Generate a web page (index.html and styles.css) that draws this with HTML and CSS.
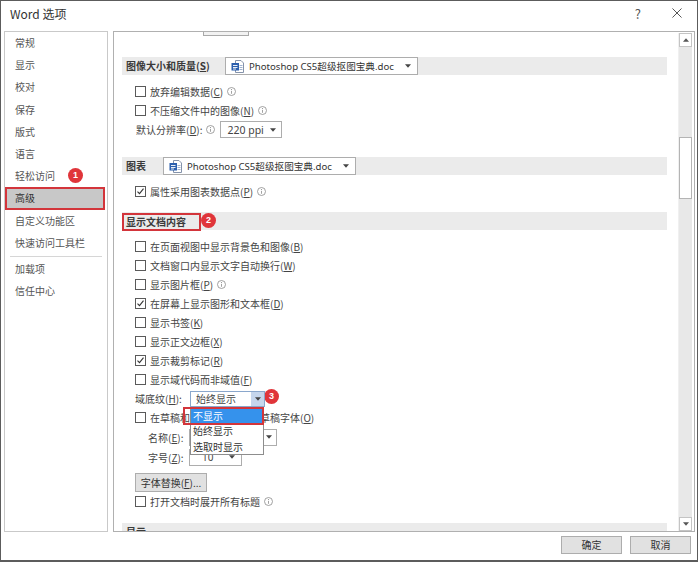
FILE: index.html
```html
<!DOCTYPE html>
<html lang="zh-CN">
 <head>
  <meta charset="utf-8">
  <title>Word 选项</title>
  <link rel="stylesheet" href="styles.css">
 </head>
 <body>

  <div class="dialog">

    <div class="titlebar">
      <span class="title">Word 选项</span>
      <span class="help">?</span>
      <svg class="close" viewBox="0 0 11 11"><path d="M0.5 0.5l10 10M10.5 0.5l-10 10" stroke="#444" stroke-width="1"/></svg>
    </div>

    <div class="main">

      <ul class="nav">
        <li>常规</li>
        <li>显示</li>
        <li>校对</li>
        <li>保存</li>
        <li>版式</li>
        <li>语言</li>
        <li>轻松访问<span class="badge b1">1</span></li>
        <li class="active">高级</li>
        <li>自定义功能区</li>
        <li>快速访问工具栏</li>
        <li class="sep"></li>
        <li>加载项</li>
        <li>信任中心</li>
      </ul>

      <div class="panel">
        <div class="content">

          <div class="stub"></div>

          <!-- image size and quality -->
          <div class="head first">
            <span class="hlabel wide">图像大小和质量(<u>S</u>)</span>
            <div class="combo doc">
              <svg class="docicon" viewBox="0 0 13 13">
                <path d="M4.5 0.5h5.5l2.5 2.5v9.5h-8z" fill="#fff" stroke="#8593ab"/>
                <path d="M8.5 5.5h3M8.5 7.5h3M8.5 9.5h3" stroke="#9fb3d1"/>
                <rect x="0.5" y="3" width="7.5" height="7.5" fill="#2b5fae"/>
                <path d="M2 5.5h4.5M2 7.5h4.5M2 9h3" stroke="#fff" stroke-width="0.9"/>
              </svg>
              <span>Photoshop CS5超级抠图宝典.doc</span>
              <svg class="arr" viewBox="0 0 7 4"><path d="M0 0h7L3.5 4z"/></svg>
            </div>
          </div>
          <div class="rows rows-a">
            <div class="row"><span class="cb"></span>放弃编辑数据(<u>C</u>)<svg class="info" viewBox="0 0 9 9"><circle cx="4.5" cy="4.5" r="4" fill="none" stroke="#8a8a8a" stroke-width="0.8"/><path d="M4.5 4v2.8" stroke="#8a8a8a" stroke-width="0.8"/><circle cx="4.5" cy="2.6" r="0.55" fill="#8a8a8a"/></svg></div>
            <div class="row"><span class="cb"></span>不压缩文件中的图像(<u>N</u>)<svg class="info" viewBox="0 0 9 9"><circle cx="4.5" cy="4.5" r="4" fill="none" stroke="#8a8a8a" stroke-width="0.8"/><path d="M4.5 4v2.8" stroke="#8a8a8a" stroke-width="0.8"/><circle cx="4.5" cy="2.6" r="0.55" fill="#8a8a8a"/></svg></div>
            <div class="row res">默认分辨率(<u>D</u>):<svg class="info" viewBox="0 0 9 9"><circle cx="4.5" cy="4.5" r="4" fill="none" stroke="#8a8a8a" stroke-width="0.8"/><path d="M4.5 4v2.8" stroke="#8a8a8a" stroke-width="0.8"/><circle cx="4.5" cy="2.6" r="0.55" fill="#8a8a8a"/></svg>
              <div class="combo ppi"><span>220 ppi</span><svg class="arr" viewBox="0 0 7 4"><path d="M0 0h7L3.5 4z"/></svg></div>
            </div>
          </div>

          <!-- chart -->
          <div class="head">
            <span class="hlabel narrow">图表</span>
            <div class="combo doc">
              <svg class="docicon" viewBox="0 0 13 13">
                <path d="M4.5 0.5h5.5l2.5 2.5v9.5h-8z" fill="#fff" stroke="#8593ab"/>
                <path d="M8.5 5.5h3M8.5 7.5h3M8.5 9.5h3" stroke="#9fb3d1"/>
                <rect x="0.5" y="3" width="7.5" height="7.5" fill="#2b5fae"/>
                <path d="M2 5.5h4.5M2 7.5h4.5M2 9h3" stroke="#fff" stroke-width="0.9"/>
              </svg>
              <span>Photoshop CS5超级抠图宝典.doc</span>
              <svg class="arr" viewBox="0 0 7 4"><path d="M0 0h7L3.5 4z"/></svg>
            </div>
          </div>
          <div class="rows rows-b">
            <div class="row"><span class="cb on"><svg viewBox="0 0 9 9"><path d="M1.5 4.6l2 2 4-5" fill="none" stroke="#333" stroke-width="1.1"/></svg></span>属性采用图表数据点(<u>P</u>)<svg class="info" viewBox="0 0 9 9"><circle cx="4.5" cy="4.5" r="4" fill="none" stroke="#8a8a8a" stroke-width="0.8"/><path d="M4.5 4v2.8" stroke="#8a8a8a" stroke-width="0.8"/><circle cx="4.5" cy="2.6" r="0.55" fill="#8a8a8a"/></svg></div>
          </div>

          <!-- show document content -->
          <div class="head">
            <span class="hlabel marked">显示文档内容</span><span class="badge">2</span>
          </div>
          <div class="rows rows-c">
            <div class="row"><span class="cb"></span>在页面视图中显示背景色和图像(<u>B</u>)</div>
            <div class="row"><span class="cb"></span>文档窗口内显示文字自动换行(<u>W</u>)</div>
            <div class="row"><span class="cb"></span>显示图片框(<u>P</u>)<svg class="info" viewBox="0 0 9 9"><circle cx="4.5" cy="4.5" r="4" fill="none" stroke="#8a8a8a" stroke-width="0.8"/><path d="M4.5 4v2.8" stroke="#8a8a8a" stroke-width="0.8"/><circle cx="4.5" cy="2.6" r="0.55" fill="#8a8a8a"/></svg></div>
            <div class="row"><span class="cb on"><svg viewBox="0 0 9 9"><path d="M1.5 4.6l2 2 4-5" fill="none" stroke="#333" stroke-width="1.1"/></svg></span>在屏幕上显示图形和文本框(<u>D</u>)</div>
            <div class="row"><span class="cb"></span>显示书签(<u>K</u>)</div>
            <div class="row"><span class="cb"></span>显示正文边框(<u>X</u>)</div>
            <div class="row"><span class="cb on"><svg viewBox="0 0 9 9"><path d="M1.5 4.6l2 2 4-5" fill="none" stroke="#333" stroke-width="1.1"/></svg></span>显示裁剪标记(<u>R</u>)</div>
            <div class="row"><span class="cb"></span>显示域代码而非域值(<u>F</u>)</div>

            <div class="row">
              <span class="flabel">域底纹(<u>H</u>):</span>
              <div class="combo shade open">
                <span>始终显示</span>
                <span class="abtn"><svg class="arr" viewBox="0 0 7 4"><path d="M0 0h7L3.5 4z"/></svg></span>
                <ul class="popup">
                  <li class="sel">不显示</li>
                  <li>始终显示</li>
                  <li>选取时显示</li>
                  <li class="mark"></li>
                </ul>
              </div>
              <span class="badge">3</span>
            </div>

            <div class="row"><span class="cb"></span>在草稿和大纲视图中使用草稿字体(<u>O</u>)</div>
            <div class="row sub">
              <span class="slabel">名称(<u>E</u>):</span>
              <div class="combo fname"><span></span><svg class="arr" viewBox="0 0 7 4"><path d="M0 0h7L3.5 4z"/></svg></div>
            </div>
            <div class="row sub">
              <span class="slabel">字号(<u>Z</u>):</span>
              <div class="combo fsize"><span>10</span><svg class="arr" viewBox="0 0 7 4"><path d="M0 0h7L3.5 4z"/></svg></div>
            </div>

            <button class="btn subst">字体替换(<u>F</u>)...</button>
            <div class="row"><span class="cb"></span>打开文档时展开所有标题<svg class="info" viewBox="0 0 9 9"><circle cx="4.5" cy="4.5" r="4" fill="none" stroke="#8a8a8a" stroke-width="0.8"/><path d="M4.5 4v2.8" stroke="#8a8a8a" stroke-width="0.8"/><circle cx="4.5" cy="2.6" r="0.55" fill="#8a8a8a"/></svg></div>
          </div>

          <div class="head">
            <span class="hlabel">显示</span>
          </div>

        </div><!-- content -->

        <div class="scrollbar">
          <div class="sbtn"><svg viewBox="0 0 7 4"><path d="M0 4h7L3.5 0z"/></svg></div>
          <div class="track-top"></div>
          <div class="thumb"></div>
          <div class="track-rest"></div>
          <div class="sbtn"><svg viewBox="0 0 7 4"><path d="M0 0h7L3.5 4z"/></svg></div>
        </div>
      </div><!-- panel -->

    </div><!-- main -->

    <div class="footer">
      <button class="btn">确定</button>
      <button class="btn">取消</button>
    </div>

  </div>

 </body>
</html>
```

FILE: styles.css
```css
*{box-sizing:border-box;margin:0;padding:0}
html,body{background:#fff}
body{font-family:"Noto Sans CJK SC","Noto Sans",sans-serif;font-size:10px;color:#444}
u{text-decoration:underline;text-underline-offset:1px}
ul{list-style:none}

.dialog{width:698px;height:562px;border:1px solid #5c5c5c;border-bottom-width:2px;display:flex;flex-direction:column;background:#fff}

/* title bar */
.titlebar{flex:none;height:30px;display:flex;align-items:center;padding:0 15px 6px 9px}
.title{flex:1;font-size:12px;color:#333}
.help{font-size:13px;color:#555;margin-right:31px}
.close{width:10px;height:10px}

.main{flex:none;height:501px;display:flex;gap:5px;padding:0 2px 0 3px}

/* left navigation */
.nav{width:104px;flex:none;border:1px solid #c9c9c9}
.nav li{height:22.2px;line-height:22.2px;padding-left:10px;color:#555}
.nav li.active{background:#c8c8c8;color:#333;outline:2px solid #d3353b;outline-offset:-2px;margin-right:2px}
.nav li.sep{height:1px;background:#d6d6d6;margin:2px 5px 1px}

.badge{display:inline-block;width:15px;height:15px;border-radius:50%;background:#e0353a;color:#fff;font-size:9px;font-weight:bold;line-height:15px;text-align:center;vertical-align:middle;font-family:"Liberation Sans",sans-serif}
.b1{margin-left:13px;margin-top:-3px}

/* right panel */
.panel{flex:1;display:flex;border:1px solid #b0b0b0;overflow:hidden}
.content{flex:1;overflow:hidden;padding:0 11px 0 8px}
.stub{width:46px;height:4px;margin-left:81px;border:1px solid #a9a9a9;border-top:0;background:#f2f2f2}

.head{height:18px;background:#ebebeb;display:flex;align-items:center;margin-top:0}
.head.first{margin-top:21px}
.hlabel{padding-left:4px;font-weight:bold;color:#3a3a3a;line-height:18px;white-space:nowrap}
.hlabel.wide{width:103px}
.hlabel.narrow{width:41px}
.hlabel.marked{width:79px;height:18px;padding-left:2px;line-height:14px;border:2px solid #d3353b;margin-top:2px}

.rows-a{padding:6.5px 0 17.5px}
.rows-b{padding:6.5px 0 11px}
.rows-c{padding:7.5px 0 12px}

.row{height:19px;display:flex;align-items:center;padding-left:13px;white-space:nowrap}
.row.res{height:20px;padding-left:14px}
.row.sub{height:20px;padding-left:26px}
.cb{width:11px;height:11px;border:1px solid #5a5a5a;background:#fff;margin-right:4px;flex:none;display:flex}
.cb svg{width:9px;height:9px}
.info{width:9px;height:9px;margin-left:4px;flex:none}

/* combo boxes */
.combo{display:flex;align-items:center;background:#fff;border:1px solid #adadad;height:18px;padding:0 4px;position:relative}
.combo span{flex:1;white-space:nowrap;overflow:hidden}
.arr{width:6px;height:4px;fill:#444;flex:none}
.combo.doc{width:193px;padding:0 6px 0 5px;font-family:"Noto Sans","Noto Sans CJK SC",sans-serif;font-size:9.6px;color:#333}
.docicon{width:13px;height:13px;margin-right:5px;flex:none}
.combo.ppi{width:62px;height:17px;margin-left:5px;padding:0 5px 0 6px;font-family:"Noto Sans",sans-serif;font-size:10.5px}
.flabel{width:55px}
.combo.shade{width:75px;height:16px;padding:0 0 0 5px;border-color:#8aa7cc}
.abtn{flex:none !important;width:13px;height:14px;background:#c6d6ec;display:flex;align-items:center;justify-content:center}
.shade + .badge{margin-left:-1px;margin-top:-5px}
.slabel{width:41px}
.combo.fname{width:88px;height:17px}
.combo.fsize{width:53px;height:17px;padding:0 6px 0 12px;font-family:"Noto Sans",sans-serif}

.popup{position:absolute;top:15px;left:-1px;width:74px;background:#fff;border:1px solid #8d8d8d;z-index:2}
.popup li{height:15.5px;line-height:15.5px;padding-left:2px;color:#333}
.popup li.sel{background:#3592ec;color:#fff}
.popup li.mark{position:absolute;left:-8px;top:-1px;width:81px;height:18px;border:2px solid #d3353b;background:transparent;padding:0}

.btn{font-family:inherit;font-size:10px;color:#333;background:#e1e1e1;border:1px solid #adadad;height:19px}
.btn.subst{display:block;width:72px;margin:6px 0 0 13px}

/* scrollbar */
.scrollbar{width:14px;flex:none;margin:1px 2px 0 0;display:flex;flex-direction:column;background:#e8e8e8;border-left:1px solid #f0f0f0}
.sbtn{height:14px;background:#fff;border:1px solid #c4c4c4;display:flex;align-items:center;justify-content:center}
.sbtn svg{width:6px;height:4px;fill:#555}
.track-top{height:90px}
.thumb{height:62px;background:#fff;border:1px solid #b4b4b4}
.track-rest{flex:1}

/* footer */
.footer{flex:1;display:flex;justify-content:flex-end;gap:8px;padding:3.5px 6px 0 0}
.footer .btn{width:61px;height:18px}
```
